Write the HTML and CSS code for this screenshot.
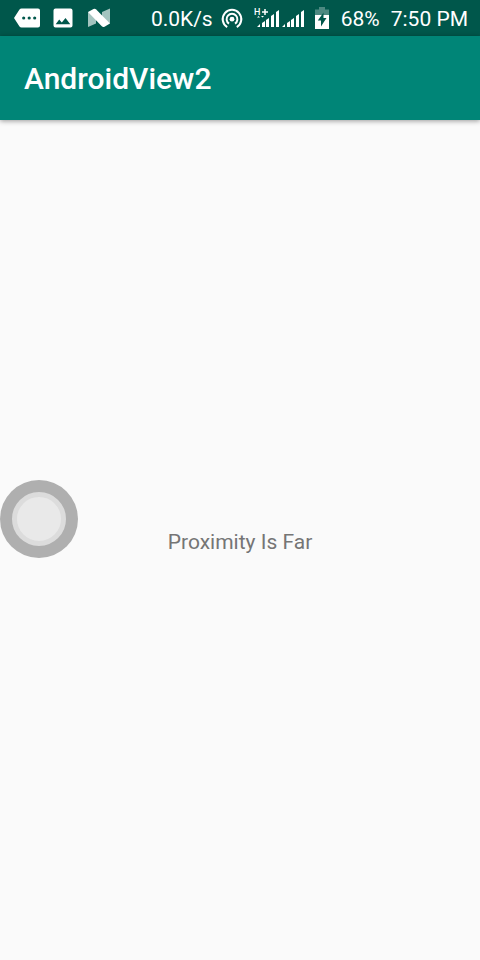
FILE: index.html
```html
<!DOCTYPE html>
<html lang="en">
<head>
<meta charset="utf-8">
<meta name="viewport" content="width=device-width, initial-scale=1">
<title>AndroidView2</title>
<link rel="stylesheet" href="styles.css">
</head>
<body>
<div class="status">
  <div class="notifications">
    <svg width="26" height="20" viewBox="0 0 26 20" aria-hidden="true">
      <path fill="#fff" fill-rule="evenodd" d="M7.500 .5H24a2 2 0 0 1 2 2V17.500a2 2 0 0 1-2 2H7.500a2.500 2.500 0 0 1-2-1L0 10 5.500 1.500a2.500 2.500 0 0 1 2-1zM9.700 8.400a1.600 1.600 0 1 0 0 3.200 1.600 1.600 0 0 0 0-3.200zM15.200 8.400a1.600 1.600 0 1 0 0 3.200 1.600 1.600 0 0 0 0-3.200zM20.700 8.400a1.600 1.600 0 1 0 0 3.200 1.600 1.600 0 0 0 0-3.200z"/>
    </svg>
    <svg width="20" height="20" viewBox="0 0 20 20" aria-hidden="true">
      <path fill="#fff" fill-rule="evenodd" d="M2.500 .5H17.500a2 2 0 0 1 2 2V17.500a2 2 0 0 1-2 2H2.500a2 2 0 0 1-2-2V2.500a2 2 0 0 1 2-2zM6.200 11.500L2.700 16.200H17.300L12.500 10 8.800 14.600z"/>
    </svg>
    <svg width="23" height="20" viewBox="0 0 23 20" aria-hidden="true">
      <path fill="#a3c4bf" d="M0 4L8 6V15.500L0 19zM22 .5V15.500L14 13V4z"/>
      <path fill="#fff" d="M0 4L5.500 1Q7 .3 8.200 1.400L22 15.500 16.500 18.700Q15 19.500 13.800 18.300z"/>
    </svg>
  </div>
  <div class="system">
    <span class="speed">0.0K/s</span>
    <svg class="hotspot" width="22" height="20" viewBox="0 0 22 20" aria-hidden="true">
      <g fill="none" stroke="#fff" stroke-width="2">
        <path d="M6.200 19.100A9.300 9.300 0 1 1 15.800 19.100"/>
        <path d="M8 15.700A5.400 5.400 0 1 1 14 15.700"/>
      </g>
      <circle cx="11" cy="11.200" r="2.400" fill="#fff"/>
    </svg>
    <svg class="signal" width="50" height="22" viewBox="0 0 50 22" role="img" aria-label="Mobile signal">
      <path fill="#fff" d="M3 20l3-3v3zM8 16l3-2V20H8zM12 13l3-2V20h-3zM17 9l3-2V20h-3zM22 5l3-2V20h-3zM28 20l3-3v3zM33 16l3-2V20h-3zM37 13l3-2V20h-3zM42 9l3-2V20h-3zM47 5l3-2V20h-3zM3 10.500l1.500-1.500L6 10.500zM7 9h3l-1.500 1.500z"/>
      <path stroke="#fff" stroke-width="1.500" fill="none" d="M8 5h6M11 2v6"/>
      <text class="network" x="0" y="8">H</text>
    </svg>
    <svg class="battery" width="14" height="22" viewBox="0 0 14 22" aria-hidden="true">
      <path fill="#4d8981" d="M4 0h6V2.500h4v6H0v-6h4z"/>
      <path fill="#fff" d="M0 8h14v14H0z"/>
      <path fill="#00574b" d="M8.500 5.500L2.800 13.500H6V19.500L11.500 11H8.500z"/>
    </svg>
    <span class="percent">68%</span>
    <time class="clock">7:50 PM</time>
  </div>
</div>
<header class="toolbar"><h1>AndroidView2</h1></header>
<main class="content">
  <p>Proximity Is Far</p>
</main>
<button class="assist" aria-label="Assistive touch"><span></span></button>
</body>
</html>
```
FILE: styles.css
```css
* {
  box-sizing: border-box;
}

body {
  margin: 0;
  min-height: 100vh;
  display: flex;
  flex-direction: column;
  background: #fafafa;
  font-family: Roboto, sans-serif;
}

.status {
  height: 36px;
  flex: none;
  display: flex;
  justify-content: space-between;
  padding: 0 12px 0 14px;
  background: #00574b;
  color: #fff;
  font-size: 21px;
  line-height: 36px;
  white-space: nowrap;
}

.status svg {
  flex: none;
  display: block;
}

.notifications {
  display: flex;
  align-items: center;
  gap: 13px;
}

.notifications svg:last-child {
  margin-left: 2px;
}

.system {
  display: flex;
  align-items: center;
}

.speed,
.percent,
.clock {
  padding-top: 2px;
}

.hotspot {
  margin-left: 8px;
}

.signal {
  margin-left: 11px;
}

.network {
  fill: #fff;
  font-size: 9px;
  font-weight: 500;
}

.battery {
  margin-left: 11px;
}

.percent {
  margin-left: 12px;
}

.clock {
  margin-left: 11px;
}

.toolbar {
  height: 84px;
  flex: none;
  display: flex;
  align-items: center;
  padding: 0 24px;
  background: #008577;
  box-shadow: 0 1px 5px rgba(0, 0, 0, 0.4);
}

.toolbar h1 {
  margin: 0;
  color: #fff;
  font-size: 30px;
  font-weight: 500;
}

.content {
  flex: 1;
  display: flex;
  align-items: center;
  justify-content: center;
  padding-top: 4px;
}

.content p {
  margin: 0;
  color: #757575;
  font-size: 21px;
  line-height: 28px;
}

.assist {
  position: fixed;
  left: 0;
  top: 50%;
  width: 78px;
  height: 78px;
  padding: 12px;
  border: 0;
  border-radius: 50%;
  background: #afafaf;
}

.assist span {
  display: block;
  height: 100%;
  border: 5px solid #dcdcdc;
  border-radius: 50%;
  background: #e9e9e9;
}
```
